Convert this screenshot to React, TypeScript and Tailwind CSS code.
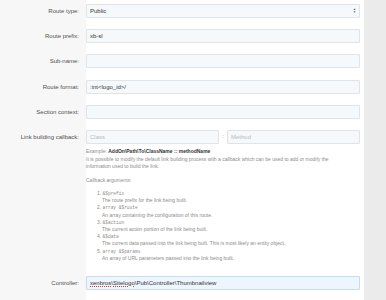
import React from "react";

const Label = ({ children }: { children: React.ReactNode }) => (
  <div className="w-[86px] shrink-0 pr-[7px] text-right text-[6px] leading-[14px] text-[#505050]">
    {children}
  </div>
);

const Input = ({ value, placeholder, className = "" }: { value?: string; placeholder?: string; className?: string }) => (
  <div
    className={`h-[14px] rounded-[1px] border border-[#e0e4e8] bg-[#f6f9fc] px-[3px] text-[6px] leading-[12px] ${className}`}
  >
    {value ? <span className="text-[#333]">{value}</span> : <span className="text-[#b5b9bd]">{placeholder}</span>}
  </div>
);

const args = [
  ["&$prefix", "The route prefix for the link being built."],
  ["array &$route", "An array containing the configuration of this route."],
  ["&$action", "The current action portion of the link being built."],
  ["&$data", "The current data passed into the link being built. This is most likely an entity object."],
  ["array &$params", "An array of URL parameters passed into the link being built."],
];

const App = () => {
  return (
    <div className="flex h-[300px] w-[386px] overflow-hidden bg-[#ebebeb] font-['Liberation_Sans',Arial,sans-serif]">
      <div className="relative w-[364px] bg-white">
        <div className="absolute inset-y-0 left-0 w-[86px] bg-[#f7f7f7]" />
        <div className="relative flex flex-col gap-[11.2px] pt-[4px] pr-[4px]">
          <div className="flex">
            <Label>Route type:</Label>
            <div className="flex h-[14px] flex-1 items-center justify-between rounded-[1px] border border-[#e0e4e8] bg-[#f6f9fc] px-[3px] text-[6px] text-[#333]">
              <span>Public</span>
              <span className="flex flex-col items-center leading-none text-[#555]">
                <span className="text-[3px]">▲</span>
                <span className="text-[3px]">▼</span>
              </span>
            </div>
          </div>
          <div className="flex">
            <Label>Route prefix:</Label>
            <Input className="flex-1" value="xb-sl" />
          </div>
          <div className="flex">
            <Label>Sub-name:</Label>
            <Input className="flex-1" />
          </div>
          <div className="flex">
            <Label>Route format:</Label>
            <Input className="flex-1" value=":int<logo_id>/" />
          </div>
          <div className="flex">
            <Label>Section context:</Label>
            <Input className="flex-1" />
          </div>
          <div className="flex">
            <Label>Link building callback:</Label>
            <div className="flex-1">
              <div className="flex items-center">
                <Input className="w-[133px]" placeholder="Class" />
                <span className="w-[8px] text-center text-[6px] text-[#888]">:</span>
                <Input className="flex-1" placeholder="Method" />
              </div>
              <div className="mt-[4px] text-[5px] leading-[7px] text-[#8c8c8c]">
                <div>
                  Example: <b className="text-[#333]">AddOn\Path\To\ClassName :: methodName</b>
                </div>
                <div className="mt-[1px] pr-[20px]">
                  It is possible to modify the default link building process with a callback which can be used to add or modify the
                  information used to build the link.
                </div>
                <div className="mt-[7px]">Callback arguments:</div>
                <ol className="mt-[6px] pl-[11px]">
                  {args.map(([code, desc], i) => (
                    <li key={code} className="leading-[7.2px]">
                      <div>
                        {i + 1}. <code className="font-['Liberation_Mono',monospace] text-[4.5px]">{code}</code>
                      </div>
                      <div className="pl-[5px]">{desc}</div>
                    </li>
                  ))}
                </ol>
              </div>
            </div>
          </div>
          <div className="mt-[3px] flex">
            <Label>Controller:</Label>
            <div className="h-[14px] flex-1 rounded-[1px] border border-[#c9dcef] bg-[#edf5fd] px-[3px] text-[6px] leading-[12px] text-[#333]">
              <span className="underline decoration-[#d33] decoration-dotted">xenbros</span>\
              <span className="underline decoration-[#d33] decoration-dotted">Sitelogo</span>\Pub\Controller\Thumbnailview
            </div>
          </div>
        </div>
      </div>
      <div className="flex-1" />
    </div>
  );
};

export default App;
